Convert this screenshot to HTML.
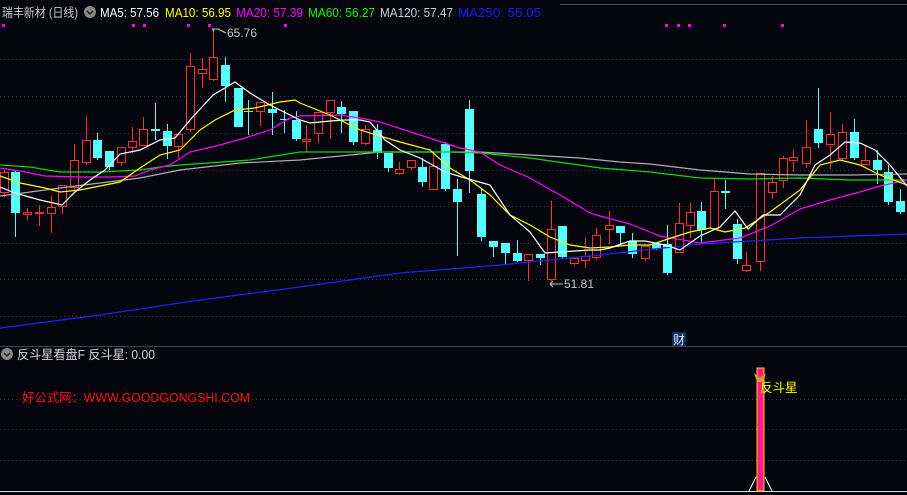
<!DOCTYPE html>
<html><head><meta charset="utf-8"><style>
html,body{margin:0;padding:0;background:#05050d;width:907px;height:495px;overflow:hidden}
svg{display:block}
text{font-family:"Liberation Sans","Noto Sans CJK SC",sans-serif}
</style></head><body>
<svg id="s" width="907" height="495" xmlns="http://www.w3.org/2000/svg">
<rect width="907" height="495" fill="#05050d"/>
<g stroke="#3a3a44" stroke-dasharray="1,3" stroke-width="1">
<line x1="0" y1="59.5" x2="907" y2="59.5"/><line x1="0" y1="96.5" x2="907" y2="96.5"/>
<line x1="0" y1="133.5" x2="907" y2="133.5"/><line x1="0" y1="170.5" x2="907" y2="170.5"/>
<line x1="0" y1="206.5" x2="907" y2="206.5"/><line x1="0" y1="243.5" x2="907" y2="243.5"/>
<line x1="0" y1="279.5" x2="907" y2="279.5"/><line x1="0" y1="316.5" x2="907" y2="316.5"/>
<line x1="0" y1="399.5" x2="907" y2="399.5"/><line x1="0" y1="429.5" x2="907" y2="429.5"/>
<line x1="0" y1="460.5" x2="907" y2="460.5"/>
</g>
<line x1="560" y1="4.5" x2="907" y2="4.5" stroke="#555" />
<line x1="0" y1="346.5" x2="907" y2="346.5" stroke="#444"/>
<line x1="0" y1="491.5" x2="907" y2="491.5" stroke="#ddd"/>
<g fill="#ff00ff">
<rect x="2" y="24" width="3" height="3"/><rect x="132" y="24" width="3" height="3"/><rect x="143" y="24" width="3" height="3"/><rect x="187" y="24" width="3" height="3"/><rect x="208" y="24" width="3" height="3"/><rect x="284" y="24" width="3" height="3"/>
<rect x="665" y="24" width="3" height="3"/><rect x="677" y="24" width="3" height="3"/><rect x="688" y="24" width="3" height="3"/><rect x="723" y="24" width="3" height="3"/><rect x="781" y="24" width="3" height="3"/>
</g>
<g id="cd"></g>
<g fill="none" stroke-width="1.2">
<polyline stroke="#2020ff" points="0,328 100,315 200,300 300,287 400,273 500,265 600,255 700,244 800,238 907,234"/>
<polyline stroke="#b0b0b0" points="0,196 60,188 100,183 140,178 180,170 240,163 300,160 350,155 380,152 480,152 530,155 580,158 620,162 650,164 700,170 750,174 800,175 850,175 907,174"/>
<polyline stroke="#00e000" points="0,165 30,167 60,172 100,172 140,170 160,167 180,165 250,160 300,152 380,152 450,152 480,153 530,158 600,168 650,172 700,178 750,179 800,178 850,180 907,180"/>
<polyline stroke="#ff00ff" points="0,168 20,171 45,176 80,177 110,177 135,176 150,170 170,165 190,152 220,145 245,138 270,130 290,118 300,116 340,115 360,118 380,122 420,135 460,148 480,152 500,165 530,178 560,195 590,213 600,216 630,224 660,236 700,243 740,238 770,226 800,209 830,200 860,192 880,186 907,180"/>
<polyline stroke="#ffff00" points="0,176 20,183 45,188 60,192 80,190 100,186 120,182 140,168 160,155 180,150 200,130 215,120 235,110 255,108 280,102 295,100 300,103 330,115 360,130 400,142 430,150 450,168 470,180 490,195 510,215 530,225 550,237 570,245 590,248 610,247 630,245 650,245 665,240 690,232 710,228 725,232 745,228 770,212 800,190 820,165 840,160 860,165 880,175 907,185"/>
<polyline stroke="#ffffff" points="0,187 15,193 40,200 62,205 75,192 90,180 105,170 120,154 140,150 160,140 175,138 190,120 213,95 235,82 250,93 270,105 290,115 300,120 310,123 330,121 345,120 360,120 370,122 385,140 400,150 420,158 445,172 465,178 490,185 510,215 530,232 545,253 560,252 590,250 600,250 610,248 630,241 645,241 665,245 680,250 700,236 720,227 735,211 748,229 763,215 780,215 800,195 815,165 830,155 845,142 860,143 875,150 890,165 907,186"/>
</g>
<text x="2" y="17" font-size="12.5" fill="#c8c8c8" textLength="76" lengthAdjust="spacingAndGlyphs">瑞丰新材 (日线)</text>
<circle cx="90" cy="12" r="6" fill="#888"/><path d="M87,11 L90,14 L93,11" stroke="#222" stroke-width="1.5" fill="none"/>
<text x="100" y="17" font-size="12.5" fill="#ffffff" textLength="59" lengthAdjust="spacingAndGlyphs">MA5: 57.56</text>
<text x="165" y="17" font-size="12.5" fill="#ffff00" textLength="66" lengthAdjust="spacingAndGlyphs">MA10: 56.95</text>
<text x="236" y="17" font-size="12.5" fill="#ff00ff" textLength="67" lengthAdjust="spacingAndGlyphs">MA20: 57.39</text>
<text x="308" y="17" font-size="12.5" fill="#00ff00" textLength="67" lengthAdjust="spacingAndGlyphs">MA60: 56.27</text>
<text x="380" y="17" font-size="12.5" fill="#d0d0d0" textLength="73" lengthAdjust="spacingAndGlyphs">MA120: 57.47</text>
<text x="458" y="17" font-size="12.5" fill="#1a1aff" textLength="83" lengthAdjust="spacingAndGlyphs">MA250: 55.05</text>
<path d="M212,29 L218,29 M212,29 L214,31 M218,29 L226,33" stroke="#ccc" fill="none"/>
<text x="227" y="37" font-size="12" fill="#c8c8c8">65.76</text>
<path d="M550,284 L563,284 M550,284 L553,281 M550,284 L553,287" stroke="#ccc" fill="none"/>
<text x="564" y="288" font-size="12" fill="#c8c8c8">51.81</text>
<rect x="672" y="332" width="14" height="14" fill="#103060"/>
<text x="673" y="344" font-size="12" fill="#e0e0ff">财</text>
<circle cx="7" cy="354" r="6" fill="#888"/><path d="M4,353 L7,356 L10,353" stroke="#222" stroke-width="1.5" fill="none"/>
<text x="17" y="359" font-size="12.5" fill="#d8d8d8" textLength="138" lengthAdjust="spacingAndGlyphs">反斗星看盘F  反斗星: 0.00</text>
<text x="22" y="402" font-size="12.5" fill="#ff1010" textLength="228" lengthAdjust="spacingAndGlyphs">好公式网：WWW.GOODGONGSHI.COM</text>
<path d="M749,491 L756,477 M765,477 L772,491" stroke="#fff" fill="none"/>
<rect x="757" y="368" width="7" height="123" fill="#ff1a8c" stroke="#ffd000" stroke-width="1"/>
<path d="M754,373 L760,378 L766,373 L763,382 L757,382 Z" fill="#d8a020"/>
<text x="760" y="392" font-size="12.5" fill="#ffff00">反斗星</text>
</svg>
<script>
var C=[
[4,172,192,170,197,0],[15,172,213,170,237,1],[27,212,214,208,220,0],[39,212,213,205,226,0],[51,207,213,196,233,0],[62,185,206,185,214,0],[74,160,187,144,190,0],[86,140,162,116,165,0],[97,140,158,133,160,1],[109,151,167,151,170,1],[121,147,162,147,166,0],[132,141,147,127,153,0],[143,129,145,117,145,0],[155,129,131,103,140,1],[167,131,146,124,159,1],[178,134,146,134,158,0],[190,66,129,53,132,0],[202,69,73,58,88,0],[213,57,79,30,81,0],[225,65,86,57,102,1],[238,88,127,88,127,1],[248,111,112,100,135,1],[260,102,111,102,126,0],[272,109,113,92,135,1],[284,119,120,110,133,1],[296,120,139,111,141,1],
[306,139,141,125,152,0],[318,112,133,112,143,0],[330,100,112,100,139,0],[341,107,114,101,133,1],[353,111,142,111,145,1],[365,129,143,125,145,0],[377,130,153,124,159,1],[388,153,168,153,172,1],[399,169,173,162,175,0],[411,160,167,160,170,0],[422,167,182,158,187,1],[433,166,189,154,189,0],[445,144,189,142,191,1],[457,189,202,179,256,1],[469,109,171,100,193,1],[481,194,237,188,241,1],[493,241,247,241,257,1],[505,243,253,243,265,1],[517,253,261,240,262,1],[528,254,260,254,281,0],[540,254,258,254,265,1],[551,229,279,201,281,0],[562,226,257,226,259,1],[574,258,263,258,265,0],[585,256,260,238,268,0],[596,235,257,228,260,0],
[609,225,229,211,244,0],[620,226,233,226,244,1],[632,241,254,233,258,1],[645,246,258,246,261,0],[656,244,249,244,250,1],[667,244,273,225,275,1],[679,223,252,203,252,0],[690,212,225,203,238,0],[701,211,230,202,242,1],[714,191,228,178,228,0],[725,191,193,180,209,1],[737,224,259,219,264,1],[746,265,270,252,272,0],[760,173,261,173,271,0],[772,182,192,176,199,0],[783,158,180,156,188,0],[793,157,160,150,172,0],[806,147,163,120,168,0],[818,129,143,88,148,1],[830,134,144,112,169,0],[842,132,158,124,160,0],[854,132,158,119,160,1],[865,160,164,145,166,0],[877,160,170,150,184,1],[888,172,202,165,205,1],[900,201,212,189,214,1]];
var g=document.getElementById('cd'),h='';
C.forEach(function(c){var x=c[0],col=c[5]?'#54ffff':'#ff3030';
h+='<line x1="'+(x+.5)+'" y1="'+c[3]+'" x2="'+(x+.5)+'" y2="'+c[4]+'" stroke="'+col+'"/>';
var bh=Math.max(1,c[2]-c[1]);
if(c[5])h+='<rect x="'+(x-4)+'" y="'+c[1]+'" width="9" height="'+bh+'" fill="'+col+'"/>';
else h+='<rect x="'+(x-3.5)+'" y="'+(c[1]+.5)+'" width="8" height="'+bh+'" fill="#05050d" stroke="'+col+'"/>';});
g.innerHTML=h;
</script>
</body></html>
